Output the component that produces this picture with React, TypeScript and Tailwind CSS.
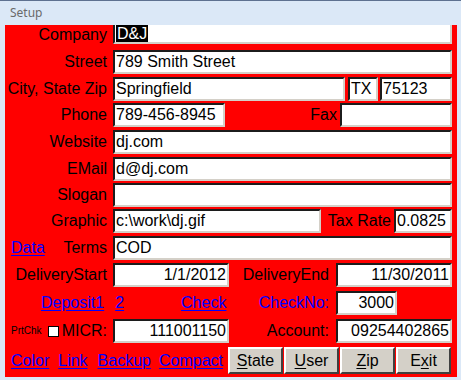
import type { ReactNode } from "react";

const font = "font-['Liberation_Sans',Arial,sans-serif]";

function Field({
  value,
  className = "",
  right = false,
}: {
  value: string;
  className?: string;
  right?: boolean;
}) {
  return (
    <div
      className={`h-[24px] overflow-hidden whitespace-nowrap border-2 border-t-[#1c1c1c] border-l-[#1c1c1c] border-b-[#d4d0c8] border-r-[#d4d0c8] bg-white text-[16px] leading-[20px] text-black ${
        right ? "pr-[1px] text-right" : "pl-[1px]"
      } ${className}`}
    >
      {value}
    </div>
  );
}

function Label({ children, className = "", blue = false }: { children: ReactNode; className?: string; blue?: boolean }) {
  return (
    <div className={`whitespace-nowrap text-right text-[16px] leading-[24px] ${blue ? "text-[#0000ff]" : "text-black"} ${className}`}>
      {children}
    </div>
  );
}

function Link({ children, className = "" }: { children: ReactNode; className?: string }) {
  return <span className={`whitespace-nowrap text-[16px] leading-[24px] text-[#0000ff] underline underline-offset-2 ${className}`}>{children}</span>;
}

function Button({ before, hot, after }: { before?: string; hot: string; after?: string }) {
  return (
    <button
      type="button"
      className="h-[27px] w-[55px] border-2 border-t-white border-l-white border-b-[#404040] border-r-[#404040] bg-[#d4d0c8] text-[16px] leading-[22px] text-black"
    >
      {before}
      <span className="underline underline-offset-2">{hot}</span>
      {after}
    </button>
  );
}

export default function App() {
  return (
    <div className={`h-[380px] w-[461px] overflow-hidden bg-[#dbe8f7] ${font}`}>
      <div className="flex h-[25px] items-center border-t border-[#5e7190] pl-[10px] font-['Noto_Sans',sans-serif] text-[12px] text-[#6a6a6a]">
        Setup
      </div>

      <div className="ml-[5px] h-[352px] w-[452px] bg-[#ff0000] pr-[5px]">
        {/* Company: field top is cut off by the caption */}
        <div className="flex h-[19px] items-center">
          <Label className="w-[102px] leading-[19px]">Company</Label>
          <div className="ml-[6px] h-[19px] flex-1 border-b-2 border-l-2 border-r-2 border-b-[#d4d0c8] border-l-[#1c1c1c] border-r-[#d4d0c8] bg-white pl-[1px] text-[16px] leading-[17px]">
            <span className="bg-black px-[1px] text-white">D&amp;J</span>
          </div>
        </div>

        <div className="mt-[6px] flex">
          <Label className="w-[102px]">Street</Label>
          <Field className="ml-[6px] flex-1" value="789 Smith Street" />
        </div>

        <div className="mt-[3px] flex">
          <Label className="w-[102px]">City, State Zip</Label>
          <Field className="ml-[6px] w-[232px]" value="Springfield" />
          <Field className="ml-[3px] w-[30px]" value="TX" />
          <Field className="ml-[2px] flex-1" value="75123" />
        </div>

        <div className="mt-[2px] flex">
          <Label className="w-[102px]">Phone</Label>
          <Field className="ml-[6px] w-[112px]" value="789-456-8945" />
          <Label className="w-[112px]">Fax</Label>
          <Field className="ml-[3px] flex-1" value="" />
        </div>

        <div className="mt-[3px] flex">
          <Label className="w-[102px]">Website</Label>
          <Field className="ml-[6px] flex-1" value="dj.com" />
        </div>

        <div className="mt-[3px] flex">
          <Label className="w-[102px]">EMail</Label>
          <Field className="ml-[6px] flex-1" value="d@dj.com" />
        </div>

        <div className="mt-[2px] flex">
          <Label className="w-[102px]">Slogan</Label>
          <Field className="ml-[6px] flex-1" value="" />
        </div>

        <div className="mt-[2px] flex">
          <Label className="w-[102px]">Graphic</Label>
          <Field className="ml-[6px] w-[208px]" value="c:\work\dj.gif" />
          <Label className="w-[70px]">Tax Rate</Label>
          <Field className="ml-[3px] flex-1" value="0.0825" />
        </div>

        <div className="mt-[3px] flex">
          <div className="flex w-[102px] items-center justify-between pl-[6px]">
            <Link>Data</Link>
            <Label>Terms</Label>
          </div>
          <Field className="ml-[6px] flex-1" value="COD" />
        </div>

        <div className="mt-[3px] flex">
          <Label className="w-[102px]">DeliveryStart</Label>
          <Field className="ml-[6px] w-[116px]" value="1/1/2012" right />
          <Label className="w-[100px]">DeliveryEnd</Label>
          <Field className="ml-[7px] flex-1" value="11/30/2011" right />
        </div>

        <div className="mt-[4px] flex">
          <div className="flex w-[221px]">
            <Link className="ml-[36px]">Deposit1</Link>
            <Link className="ml-[11px]">2</Link>
            <Link className="ml-[57px]">Check</Link>
          </div>
          <Label className="w-[103px]" blue>
            CheckNo:
          </Label>
          <Field className="ml-[7px] w-[61px]" value="3000" right />
        </div>

        <div className="mt-[4px] flex">
          <div className="flex w-[102px] items-center">
            <span className="ml-[6px] text-[10px] leading-[24px] text-black">PrtChk</span>
            <span className="ml-[6px] h-[11px] w-[11px] border border-black bg-white" />
            <span className="ml-auto text-[16px] leading-[24px] text-black">MICR:</span>
          </div>
          <Field className="ml-[6px] w-[116px]" value="111001150" right />
          <Label className="w-[100px]">Account:</Label>
          <Field className="ml-[7px] flex-1" value="09254402865" right />
        </div>

        <div className="mt-[4px] flex items-center">
          <div className="flex w-[223px]">
            <Link className="ml-[6px]">Color</Link>
            <Link className="ml-[9px]">Link</Link>
            <Link className="ml-[10px]">Backup</Link>
            <Link className="ml-[8px]">Compact</Link>
          </div>
          <div className="flex gap-[1px]">
            <Button hot="S" after="tate" />
            <Button hot="U" after="ser" />
            <Button hot="Z" after="ip" />
            <Button before="E" hot="x" after="it" />
          </div>
        </div>
      </div>
    </div>
  );
}
